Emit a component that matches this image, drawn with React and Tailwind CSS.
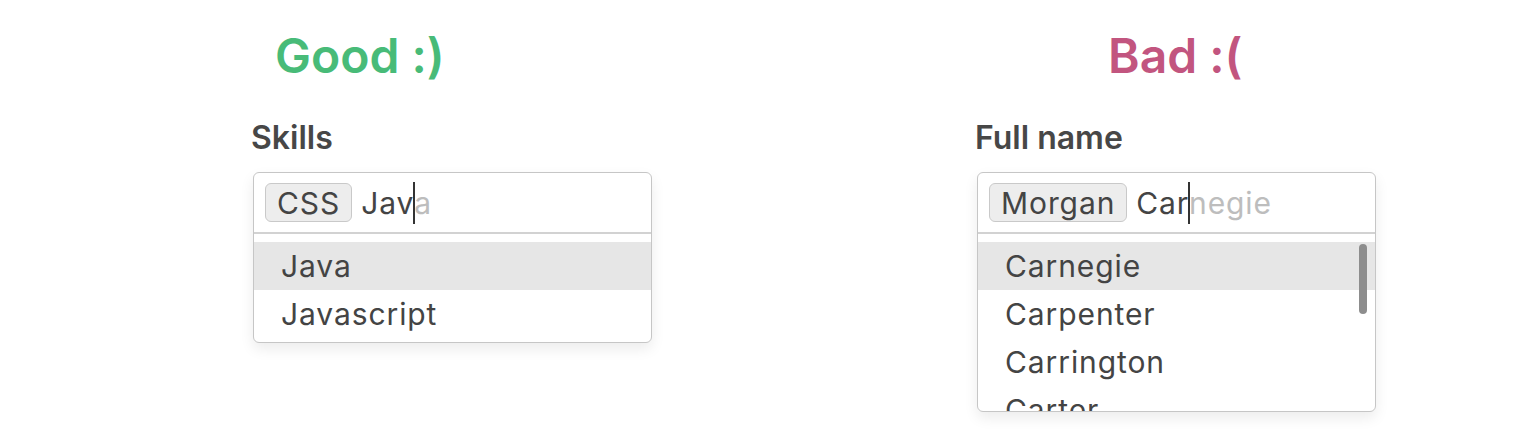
import React from 'react';

const font = { fontFamily: 'Inter, "Noto Sans", sans-serif' };

function Chip({ children }) {
  return (
    <span className="inline-flex items-center h-[39px] px-[11px] rounded-[6px] border border-[#c9c9c9] bg-[#ededed] text-[30px] tracking-[0.03em] text-[#444] leading-none">
      {children}
    </span>
  );
}

function Caret() {
  return <span className="inline-block w-[2px] h-[42px] bg-[#333] -mx-[1px] relative z-10" />;
}

function Combo({ chip, typed, rest, items, height, scroll }) {
  return (
    <div className="w-[399px] rounded-[6px] border border-[#c6c6c6] bg-white shadow-[0_6px_14px_rgba(0,0,0,0.08)] overflow-hidden flex flex-col" style={height ? { height } : undefined}>
      {/* input row */}
      <div className="h-[61px] shrink-0 flex items-center pl-[11px] gap-[9px] border-b-2 border-[#d2d2d2]">
        <Chip>{chip}</Chip>
        <span className="flex items-center text-[30px] tracking-[0.03em] leading-none">
          <span className="text-[#444]">{typed}</span>
          <Caret />
          <span className="text-[#bdbdbd]">{rest}</span>
        </span>
      </div>
      {/* options */}
      <div className="relative flex-1 overflow-hidden pt-[8px] pb-[4px]">
        {items.map((it, i) => (
          <div
            key={it}
            className={
              'h-[48px] flex items-center pl-[27px] text-[30px] tracking-[0.03em] text-[#444] ' +
              (i === 0 ? 'bg-[#e6e6e6]' : '')
            }
          >
            {it}
          </div>
        ))}
        {scroll && (
          <div className="absolute right-[8px] top-[10px] w-[8px] h-[70px] rounded-full bg-[#8d8d8d]" />
        )}
      </div>
    </div>
  );
}

export default function App() {
  return (
    <div className="w-[1536px] h-[440px] bg-white flex" style={font}>
      {/* Good column */}
      <div className="ml-[251px] flex flex-col">
        <h2 className="ml-[24px] mt-[26px] text-[48px] font-semibold leading-[60px] text-[#48bb78]">Good :)</h2>
        <div className="mt-[32px] text-[32px] font-semibold text-[#474747] leading-[40px]">Skills</div>
        <div className="mt-[14px] ml-[2px]">
          <Combo chip="CSS" typed="Jav" rest="a" items={['Java', 'Javascript']} />
        </div>
      </div>

      {/* Bad column */}
      <div className="ml-[323px] flex flex-col">
        <h2 className="ml-[133px] mt-[26px] text-[48px] font-semibold leading-[60px] text-[#c2557f]">Bad :(</h2>
        <div className="mt-[32px] text-[32px] font-semibold text-[#474747] leading-[40px]">Full name</div>
        <div className="mt-[14px] ml-[2px]">
          <Combo
            chip="Morgan"
            typed="Car"
            rest="negie"
            items={['Carnegie', 'Carpenter', 'Carrington', 'Carter']}
            height={240}
            scroll
          />
        </div>
      </div>
    </div>
  );
}
